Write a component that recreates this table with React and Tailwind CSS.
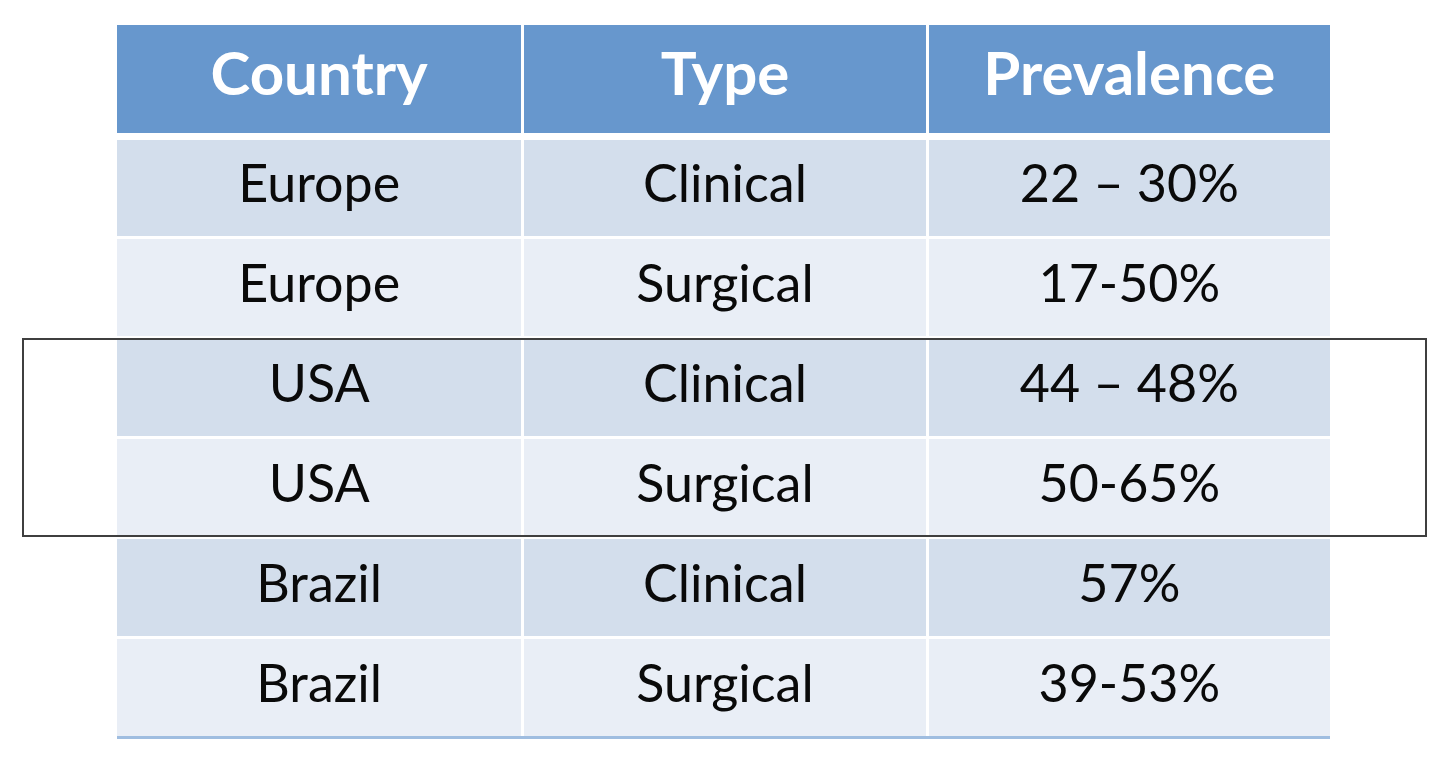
import React from "react";

const rows = [
  ["Europe", "Clinical", "22 – 30%"],
  ["Europe", "Surgical", "17-50%"],
  ["USA", "Clinical", "44 – 48%"],
  ["USA", "Surgical", "50-65%"],
  ["Brazil", "Clinical", "57%"],
  ["Brazil", "Surgical", "39-53%"],
];

const font = { fontFamily: "Lato, 'Open Sans', sans-serif" };

export default function App() {
  return (
    <div className="relative h-[760px] w-[1440px] bg-white overflow-hidden" style={font}>
      <div className="ml-[117px] pt-[25px] w-[1213px]">
        {/* Header */}
        <div className="grid grid-cols-3 h-[108px] bg-[#6797cd] text-white font-bold text-[60px]">
          {["Country", "Type", "Prevalence"].map((h, i) => (
            <div
              key={h}
              className={`flex items-center justify-center pb-[14px] ${i > 0 ? "border-l-[3px] border-white" : ""}`}
            >
              {h}
            </div>
          ))}
        </div>

        {/* Body */}
        <div className="border-b-[3px] border-[#9fbde0]">
          {rows.map((r, idx) => (
            <div
              key={idx}
              className={`grid grid-cols-3 border-t-white text-[#0a0a0a] text-[52px] ${
                idx === 0 ? "border-t-[7px] h-[103px]" : "border-t-[3px] h-[100px]"
              } ${idx % 2 === 0 ? "bg-[#d3deec]" : "bg-[#e9eef6]"}`}
            >
              {r.map((c, i) => (
                <div
                  key={i}
                  className={`flex items-center justify-center pb-[12px] ${i > 0 ? "border-l-[3px] border-white" : ""}`}
                >
                  {c}
                </div>
              ))}
            </div>
          ))}
        </div>
      </div>

      {/* Highlight box over USA rows */}
      <div className="absolute left-[22px] top-[338px] w-[1405px] h-[199px] border-2 border-[#3f3f3f]" />
    </div>
  );
}
